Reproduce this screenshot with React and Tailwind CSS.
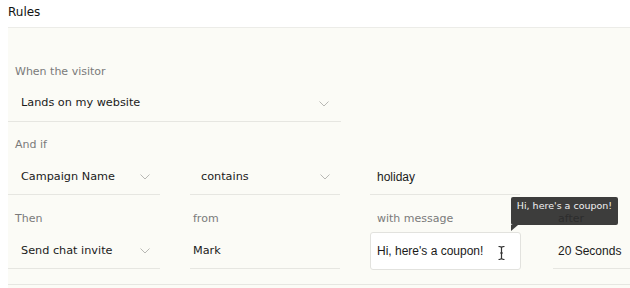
import React from "react";

const Chevron = () => (
  <svg width="10" height="6" viewBox="0 0 10 6" className="shrink-0">
    <polyline points="0.5,0.5 5,5 9.5,0.5" fill="none" stroke="#b8b8b4" strokeWidth="1" />
  </svg>
);

const Label = ({ children, className = "" }) => (
  <div className={"h-4 leading-4 text-[11px] text-[#7a7a7a] font-['DejaVu_Sans',sans-serif] " + className}>
    {children}
  </div>
);

export default function App() {
  return (
    <div className="relative w-[630px] h-[288px] bg-white overflow-hidden font-['DejaVu_Sans',sans-serif]">
      <div className="h-[27px] pl-2 pt-[4px]">
        <div className="leading-4 text-[12px] text-[#111]">Rules</div>
      </div>
      <div className="ml-2 h-[261px] bg-[#fbfbf6] border-t border-[#ececE8] flex flex-col">
        {/* Section 1 */}
        <div className="pt-[36px]">
          <Label className="pl-[7px]">When the visitor</Label>
          <div className="mt-[6px] w-[333px] h-[36px] border-b border-[#e6e6e1] flex items-center justify-between pl-[13px] pr-[12px] text-[11.25px] text-[#1a1a1a]">
            <span>Lands on my website</span>
            <Chevron />
          </div>
        </div>
        {/* Section 2 */}
        <div className="pt-[15px]">
          <Label className="pl-[7px]">And if</Label>
          <div className="mt-[7px] flex">
            <div className="w-[152px] h-[35px] border-b border-[#e6e6e1] flex items-center justify-between pl-[13px] pr-[10px] text-[11.25px] text-[#1a1a1a]">
              <span>Campaign Name</span>
              <Chevron />
            </div>
            <div className="ml-[30px] w-[150px] h-[35px] border-b border-[#e6e6e1] flex items-center justify-between pl-[11px] pr-[10px] text-[11.25px] text-[#1a1a1a]">
              <span>contains</span>
              <Chevron />
            </div>
            <div className="ml-[30px] w-[150px] h-[35px] border-b border-[#e6e6e1] flex items-center pl-[7px] text-[12px] text-[#1a1a1a] font-['Liberation_Sans',sans-serif]">
              holiday
            </div>
          </div>
        </div>
        {/* Section 3 */}
        <div className="pt-[16px] flex items-start">
          <div className="w-[152px]">
            <Label className="pl-[7px]">Then</Label>
            <div className="mt-[7px] h-[35px] border-b border-[#e6e6e1] flex items-center justify-between pl-[13px] pr-[10px] text-[11.25px] text-[#1a1a1a]">
              <span>Send chat invite</span>
              <Chevron />
            </div>
          </div>
          <div className="ml-[30px] w-[150px]">
            <Label className="pl-[3px]">from</Label>
            <div className="mt-[7px] h-[35px] border-b border-[#e6e6e1] flex items-center pl-[3px] text-[11.25px] text-[#1a1a1a]">
              Mark
            </div>
          </div>
          <div className="ml-[30px] w-[151px]">
            <Label className="pl-[7px]">with message</Label>
            <div className="mt-[5px] h-[38px] bg-white border border-[#e2e2de] rounded-[3px] flex items-center pl-[6px] text-[12px] text-[#1a1a1a] font-['Liberation_Sans',sans-serif]">
              <span>Hi, here's a coupon!</span>
              <svg width="7" height="14" viewBox="0 0 7 14" className="ml-auto mr-[15px] mt-[4px]">
                <path d="M0.5 0.5 Q3.5 0.5 3.5 2 L3.5 12 Q3.5 13.5 0.5 13.5 M6.5 0.5 Q3.5 0.5 3.5 2 M3.5 12 Q3.5 13.5 6.5 13.5 M2 7 L5 7" fill="none" stroke="#333" strokeWidth="1.2" />
              </svg>
            </div>
          </div>
          <div className="ml-[32px] flex-1">
            <Label className="pl-[5px]">after</Label>
            <div className="mt-[7px] h-[35px] border-b border-[#e6e6e1] flex items-center pl-[5px] text-[12px] text-[#1a1a1a] font-['Liberation_Sans',sans-serif]">
              20 Seconds
            </div>
          </div>
        </div>
        <div className="mt-[14px] border-t border-[#e6e6e1]" />
      </div>

      {/* Tooltip */}
      <div className="absolute left-[511px] top-[197px] w-[107px] h-[28px] rounded-[2px] bg-[rgba(34,34,34,0.88)]">
        <div className="pt-[2px] leading-[14px] text-center text-[9.5px] text-[#f2f2f2] font-['DejaVu_Sans',sans-serif]">
          Hi, here's a coupon!
        </div>
        <svg width="7" height="6" viewBox="0 0 7 6" className="absolute left-0 top-full">
          <polygon points="0,0 7,0 0,6" fill="rgba(34,34,34,0.88)" />
        </svg>
      </div>
    </div>
  );
}
